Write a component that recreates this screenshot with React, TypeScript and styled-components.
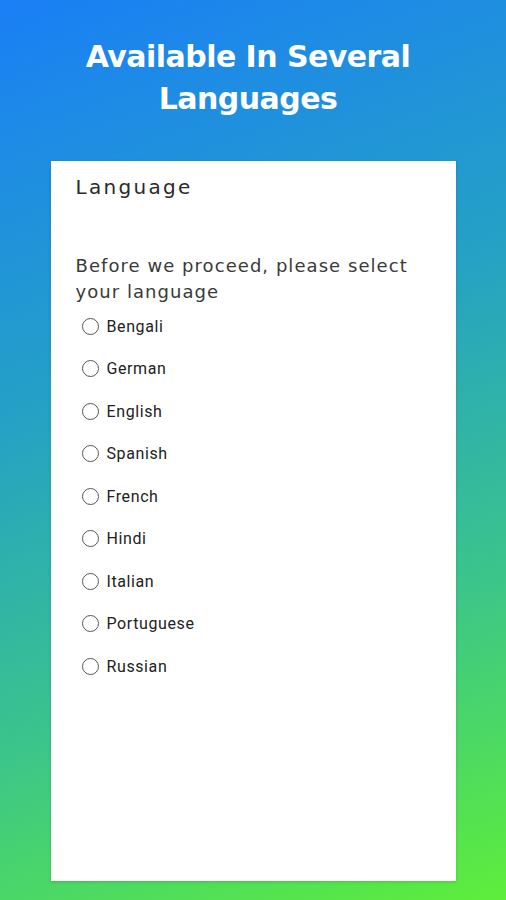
import styled, { createGlobalStyle } from "styled-components";

const GlobalStyle = createGlobalStyle`
  html, body {
    margin: 0;
    padding: 0;
  }
`;

const Screen = styled.div`
  width: 506px;
  height: 900px;
  box-sizing: border-box;
  padding-top: 36px;
  background: linear-gradient(160deg, #1a7ff6 0%, #25a2c4 40%, #3cc58a 70%, #5eee3a 100%);
  display: flex;
  flex-direction: column;
  align-items: center;
  overflow: hidden;
`;

const Heading = styled.h1`
  margin: 0 10px 0 0;
  color: #fff;
  font-family: "DejaVu Sans", Verdana, sans-serif;
  font-weight: bold;
  font-size: 30px;
  line-height: 42px;
  text-align: center;
  letter-spacing: -0.55px;
`;

const Card = styled.div`
  margin-top: 41px;
  width: 405px;
  height: 720px;
  box-sizing: border-box;
  background: #fff;
  padding: 12px 25px;
  box-shadow: 0 1px 3px rgba(0, 0, 0, 0.15);
`;

const CardTitle = styled.div`
  font-family: "DejaVu Sans", sans-serif;
  font-size: 20px;
  line-height: 28px;
  letter-spacing: 2.3px;
  color: #2a2a2a;
`;

const Prompt = styled.div`
  margin-top: 52px;
  font-family: "DejaVu Sans", sans-serif;
  font-size: 18px;
  line-height: 26px;
  letter-spacing: 1.05px;
  color: #3a3a3a;
`;

const OptionList = styled.div`
  display: flex;
  flex-direction: column;
`;

const Option = styled.label`
  display: flex;
  align-items: center;
  height: 42.5px;
  gap: 8px;
  padding-left: 6px;
  font-family: Roboto, sans-serif;
  font-size: 16px;
  letter-spacing: 0.6px;
  color: #222;
`;

const Circle = styled.span`
  width: 15px;
  height: 15px;
  border: 1.6px solid #555;
  border-radius: 50%;
  flex-shrink: 0;
`;

const languages = [
  "Bengali",
  "German",
  "English",
  "Spanish",
  "French",
  "Hindi",
  "Italian",
  "Portuguese",
  "Russian",
];

export default function App() {
  return (
    <>
      <GlobalStyle />
      <Screen>
        <Heading>
          Available In Several
          <br />
          Languages
        </Heading>
        <Card>
          <CardTitle>Language</CardTitle>
          <Prompt>
            Before we proceed, please select
            <br />
            your language
          </Prompt>
          <OptionList>
            {languages.map((lang) => (
              <Option key={lang}>
                <Circle />
                {lang}
              </Option>
            ))}
          </OptionList>
        </Card>
      </Screen>
    </>
  );
}
